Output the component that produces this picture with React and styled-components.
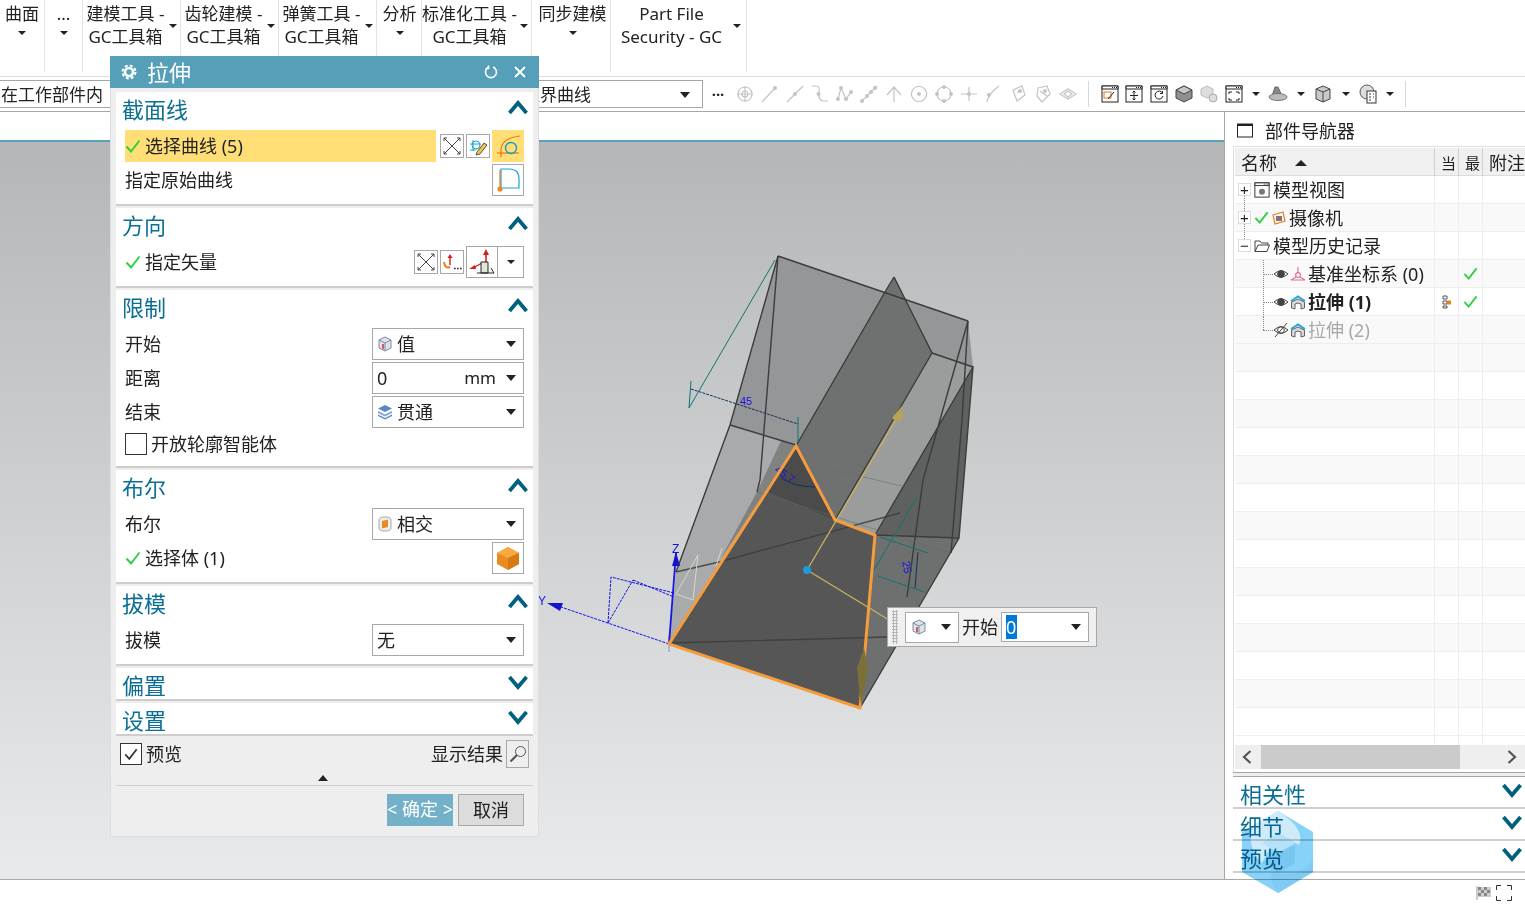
import React from "react";
import styled, { createGlobalStyle } from "styled-components";

const GlobalStyle = createGlobalStyle`
  html, body { margin: 0; padding: 0; background: #fff; overflow: hidden; }
  * { box-sizing: border-box; }
  body { font-family: "Noto Sans", "Noto Sans CJK SC", sans-serif; color: #222; }
`;

const ribbonItems = [
  { w: 45, lines: ["曲面"] },
  { w: 38, lines: ["..."] },
  { w: 98, pr: 12, lines: ["建模工具 -", "GC工具箱"] },
  { w: 98, pr: 12, lines: ["齿轮建模 -", "GC工具箱"] },
  { w: 98, pr: 12, lines: ["弹簧工具 -", "GC工具箱"] },
  { w: 45, pl: 1, lines: ["分析"] },
  { w: 110, pr: 14, lines: ["标准化工具 -", "GC工具箱"] },
  { w: 79, pl: 3, lines: ["同步建模"] },
  { w: 136, pr: 14, caretRight: 5, lines: ["Part File", "Security - GC"] },
];

const treeRows = [
  { kind: "view", label: "模型视图", line: "rootFirst" },
  { kind: "camera", label: "摄像机", line: "root" },
  { kind: "history", label: "模型历史记录", line: "rootLast" },
  { kind: "csys", label: "基准坐标系 (0)", latest: true, line: "child" },
  { kind: "extrude", label: "拉伸 (1)", bold: true, latest: true, current: true, line: "child" },
  { kind: "extrudeOff", label: "拉伸 (2)", muted: true, line: "childLast" },
];

const Check = ({ size = 16, color = "#2fcf45" }) => (
  <svg width={size} height={size} viewBox="0 0 16 16">
    <path d="M1.5 8.5 L6 13.5 L14.5 2.5" fill="none" stroke={color} strokeWidth="2" />
  </svg>
);

const Chevron = ({ up }) => (
  <svg width="20" height="14" viewBox="0 0 20 14">
    <path
      d={up ? "M1.5 13 L10 3 L18.5 13" : "M1.5 1 L10 11 L18.5 1"}
      fill="none"
      stroke="#00607f"
      strokeWidth="3.8"
    />
  </svg>
);

const CrossArrows = () => (
  <svg width="18" height="18" viewBox="0 0 18 18" fill="none" stroke="#444" strokeWidth="1">
    <path d="M1 1 L17 17 M17 1 L1 17 M1 1 h3 M1 1 v3 M17 1 h-3 M17 1 v3 M1 17 h3 M1 17 v-3 M17 17 h-3 M17 17 v-3" />
  </svg>
);

const SketchIcon = () => (
  <svg width="20" height="20" viewBox="0 0 20 20" fill="none">
    <path d="M2 8 H13 M5 4 V15 M2 14 H8" stroke="#18a7d0" />
    <circle cx="8" cy="9" r="4" stroke="#18a7d0" />
    <path d="M9 16 L16 7 L19 9 L12 18 L8 19 Z" fill="#f0c34e" stroke="#333" strokeWidth="0.8" />
  </svg>
);

const CurveIcon = () => (
  <svg width="26" height="26" viewBox="0 0 26 26" fill="none">
    <path d="M6 24 V16 Q7 5 25 3" stroke="#e8761c" strokeWidth="1.2" />
    <path d="M2 20 H24" stroke="#e8761c" strokeWidth="1.2" />
    <circle cx="16" cy="15" r="5.5" stroke="#12a0c8" strokeWidth="1.4" />
  </svg>
);

const OriginCurve = () => (
  <svg width="26" height="26" viewBox="0 0 26 26" fill="none">
    <path d="M6 21 H24 V12 Q24 2 14 2 H6 Z" stroke="#12a8d0" strokeWidth="1.2" fill="none" />
    <path d="M5 3 V21" stroke="#e8761c" strokeWidth="1.2" />
    <circle cx="5" cy="22" r="2.6" fill="#e88a1c" />
  </svg>
);

const VectorDots = () => (
  <svg width="20" height="20" viewBox="0 0 20 20" fill="none">
    <path d="M8 2 L5.5 6 H10.5 Z" fill="#d02020" />
    <path d="M8 5 V13" stroke="#d02020" strokeWidth="1.4" />
    <path d="M2 10 Q3 17 8 15" stroke="#e8801c" strokeWidth="2" />
    <path d="M12 16.5 h1.6 M15 16.5 h1.6 M18 16.5 h1.6" stroke="#222" strokeWidth="1.6" />
  </svg>
);

const VectorAxes = () => (
  <svg width="28" height="28" viewBox="0 0 28 28" fill="none">
    <path d="M18 1 L15 7 H21 Z" fill="#d02020" />
    <path d="M18 6 V14" stroke="#d02020" strokeWidth="1.6" />
    <path d="M1 21 L7 17 L8 21 Z" fill="#d02020" />
    <path d="M5 20 L14 15" stroke="#d02020" strokeWidth="1.4" />
    <path d="M13 14 H20 V25 H13 Z" fill="#dfe6d8" stroke="#222" />
    <path d="M9 25 H26 L23 20" stroke="#222" />
  </svg>
);

const BlockValue = () => (
  <svg width="16" height="16" viewBox="0 0 16 16">
    <path d="M8 1 L14 4 V12 L8 15 L2 12 V4 Z" fill="#dfe3ea" stroke="#7d8aa0" />
    <path d="M2 4 L8 7 L14 4 M8 7 V15" fill="none" stroke="#7d8aa0" />
    <path d="M6 8 V13" stroke="#d02020" strokeWidth="1.4" />
  </svg>
);

const BlockThrough = () => (
  <svg width="16" height="16" viewBox="0 0 16 16" fill="#5a86c8">
    <path d="M8 1 L15 4.5 L8 8 L1 4.5 Z" />
    <path d="M1 7 L8 10.5 L15 7 V9 L8 12.5 L1 9 Z" fill="#7fa3d8" />
    <path d="M1 10.5 L8 14 L15 10.5 V12 L8 15.5 L1 12 Z" fill="#5a86c8" />
  </svg>
);

const BlockIntersect = () => (
  <svg width="16" height="16" viewBox="0 0 16 16">
    <path d="M2 4 Q2 1 8 1 Q14 1 14 4 V12 Q14 15 8 15 Q2 15 2 12 Z" fill="#eee" stroke="#a8a8a8" />
    <path d="M5 5 L11 3.5 V11 L5 12.5 Z" fill="#ea8a22" />
  </svg>
);

const OrangeCube = () => (
  <svg width="26" height="26" viewBox="0 0 26 26">
    <path d="M13 2 L24 8 V19 L13 25 L2 19 V8 Z" fill="#e88c20" />
    <path d="M13 2 L24 8 L13 13 L2 8 Z" fill="#f5a940" />
    <path d="M13 13 L24 8 V19 L13 25 Z" fill="#d87a14" />
  </svg>
);

const Magnifier = () => (
  <svg width="18" height="18" viewBox="0 0 18 18" fill="none" stroke="#555">
    <circle cx="11.5" cy="6.5" r="5" />
    <path d="M8 10 L1.5 16.5" strokeWidth="2.2" />
  </svg>
);

const GrayIcon = ({ d, dots = [] }) => (
  <svg width="20" height="20" viewBox="0 0 20 20" fill="none" stroke="#c4c4c4" strokeWidth="1.2">
    <path d={d} />
    {dots.map(([x, y], i) => (
      <circle key={i} cx={x} cy={y} r="2" fill="#c4c4c4" stroke="none" />
    ))}
  </svg>
);

const grayIcons = [
  { d: "M10 2 V18 M2 10 H18 M10 3 a7 7 0 1 0 .01 0 M7 10 a3 3 0 1 0 6 0 a3 3 0 1 0 -6 0" },
  { d: "M2 18 L16 3", dots: [[15, 4]] },
  { d: "M2 18 L18 2", dots: [[10, 10]] },
  { d: "M2 2 H6 Q10 2 9 8 Q8 16 13 17 H18", dots: [[8.5, 10]] },
  { d: "M3 15 L6 4 L11 15 L16 8", dots: [[3, 15], [6, 4], [11, 15], [16, 8]] },
  { d: "M2 18 L18 2", dots: [[3, 17], [8, 12], [12, 8], [16, 4]] },
  { d: "M10 3 V18 M3 11 L10 3 L17 11" },
  { d: "M10 2.5 a7.5 7.5 0 1 0 .01 0", dots: [[10, 10]] },
  { d: "M10 3 a7 7 0 1 0 .01 0", dots: [[10, 3], [10, 17], [3, 10], [17, 10]] },
  { d: "M10 3 V17 M2 10 H18", dots: [[10, 10]] },
  { d: "M4 18 Q5 10 16 2", dots: [[6, 11]] },
  { d: "M5 6 L14 2 L17 11 L9 17 Z M9 8 h4", dots: [[12, 7]] },
  { d: "M5 4 L14 2 L17 10 L9 18 L4 12 Z M7 7 L14 12", dots: [[12, 7]] },
  { d: "M10 5 L18 10 L10 15 L2 10 Z M6 10 L10 7 L14 10 L10 13 Z" },
];

const WindowIcon = ({ size = 18, children }) => (
  <svg width={size} height={size} viewBox="0 0 18 18" fill="none">
    <rect x="1" y="1" width="16" height="16" fill="#fff" stroke="#222" />
    <path d="M1 1 H17 V4 H1 Z" fill="#fff" stroke="#222" />
    <path d="M11 2.5 h1 M13 2.5 h1 M15 2.5 h1" stroke="#222" />
    {children}
  </svg>
);

const HeavyCube = () => (
  <svg width="20" height="20" viewBox="0 0 20 20">
    <path d="M10 2 L18 6 V14 L10 18 L2 14 V6 Z" fill="#8f8f8f" stroke="#444" />
    <path d="M2 6 L10 10 L18 6 L10 2 Z" fill="#c8c8c8" stroke="#444" />
  </svg>
);

const CylCube = () => (
  <svg width="20" height="20" viewBox="0 0 20 20">
    <path d="M3 5 L10 2 L17 5 V15 L10 18 L3 15 Z" fill="#c8c8c8" stroke="#444" />
    <path d="M3 5 L10 8 L17 5 M10 8 V18" fill="none" stroke="#444" />
  </svg>
);

const Eye = ({ off }) => (
  <svg width="16" height="16" viewBox="0 0 16 16" fill="none" stroke="#444">
    <path d="M1 8 Q8 1.5 15 8 Q8 14.5 1 8 Z" />
    <circle cx="8" cy="8" r="3.4" fill={off ? "none" : "#444"} />
    {off && <path d="M2 15 L14 1" />}
  </svg>
);

const ExtrudeNode = () => (
  <svg width="16" height="16" viewBox="0 0 16 16" fill="none">
    <path d="M1 7 L8 2.5 L15 7" stroke="#26a8d8" strokeWidth="2" />
    <path d="M1.5 8 L8 5 L14.5 8 V14 L11 15 V10 L8 9 L5 10 V15 L1.5 14 Z" fill="#d8d8d8" stroke="#555" strokeWidth="0.9" />
  </svg>
);

const Csys = () => (
  <svg width="16" height="16" viewBox="0 0 16 16" fill="none" stroke="#e0708c" strokeWidth="1.1">
    <circle cx="8" cy="9" r="2.4" />
    <path d="M8 1 V7 M6 11 L1 14 M10 11 L15 14 M1 14 H15" />
  </svg>
);

const Model = () => (
  <ModelSvg viewBox="0 142 1224 737">
    {/* back and side faces */}
    <polygon points="778,256 968,321 973,367 875,535 835,520 796,446 730,425" fill="#959697" />
    <polygon points="730,425 796,446 669,644 676,572" fill="#a9aaab" />
    <polygon points="796,446 781,441 757,492 720,560" fill="#808181" />
    <polygon points="885,292 894,277 932,353 835,520 796,446" fill="#6f7070" />
    <polygon points="932,353 973,367 875,535 835,520" fill="#9b9c9c" />
    <polygon points="973,367 959,538 875,535" fill="#5f6060" />
    <polygon points="875,535 959,538 860,708" fill="#6e6f6f" />
    <polygon points="796,446 835,520 875,535 860,708 669,644" fill="#565656" />
    <polygon points="796,446 835,520 766,491" fill="#4b4b4b" />
    {/* edges */}
    <g fill="none" stroke="#3c3c3c" strokeWidth="1.4">
      <path d="M778,256 L968,321 M778,256 L730,425 L676,572 M730,425 L796,445" />
      <path d="M778,256 L760,480 L757,492 M885,292 L796,446 M894,277 L885,292 M894,277 L932,353 L835,520" />
      <path d="M932,353 L973,367 L875,535 M968,321 L923,480 L907,597 M973,367 L959,538 L860,708" />
      <path d="M968,321 L962,420 L951,553 M959,538 L875,535" />
      <path d="M676,572 L719,562 L900,513 M669,643 L887,637" strokeOpacity="0.85" />
    </g>
    <path d="M757,492 L950,553 M835,470 L918,490" fill="none" stroke="#666" strokeOpacity="0.5" />
    {/* light construction lines near the origin */}
    <path d="M698,555 L676,594 L693,600 Z M722,548 L716,566" fill="none" stroke="#d5d5d5" />
    {/* dimensions */}
    <g fill="none" stroke="#11756f" strokeWidth="1">
      <path d="M775,260 L689,408 M691,381 L689,408 M798,417 L798,442" />
      <path d="M880,537 L928,553 M878,576 L924,592 M917,497 L874,570" />
    </g>
    <g fill="none" stroke="#12305c" strokeWidth="1">
      <path d="M691,389 L798,424" strokeDasharray="3 1" />
      <path d="M918,552 L915,588 M781,478 Q795,487 815,487" />
    </g>
    <DimLabel x="740" y="405">45</DimLabel>
    <DimLabel x="775" y="478" transform="rotate(35 785 473)">45.7</DimLabel>
    <DimLabel x="902" y="570" transform="rotate(80 907 566)">25</DimLabel>
    {/* datum axes */}
    <g fill="none" stroke="#1414e6" strokeWidth="1">
      <path d="M608,623 L611,577 L674,593 M633,580 L674,597 M608,623 L633,580" strokeDasharray="3 1" />
      <path d="M669,644 L561,607" strokeDasharray="3 1" />
      <path d="M669,644 L676,553" strokeWidth="1.8" />
      <path d="M669,636 V652" strokeOpacity="0.4" />
    </g>
    <path d="M676,552 L672,566 H680 Z" fill="#1414c8" />
    <path d="M547,603 L563,603 L560,611 Z" fill="#1414c8" />
    <AxisLabel x="672" y="553">Z</AxisLabel>
    <AxisLabel x="538" y="605">Y</AxisLabel>
    {/* section outline */}
    <polygon
      points="796,446 835,520 875,535 860,708 669,644"
      fill="none"
      stroke="#f59c3c"
      strokeWidth="3"
    />
    {/* extrude handles */}
    <g fill="none" stroke="#c9b25e" strokeWidth="1.3">
      <path d="M807,570 L897,418" />
      <path d="M807,570 L889,620" />
    </g>
    <path d="M902,406 L892,418 Q897,424 903,419 Z" fill="#b8a35c" />
    <path d="M864,648 L857,668 L861,706 L868,668 Z" fill="#7d6f38" />
    <circle cx="807" cy="570" r="4" fill="#1a9ae0" />
  </ModelSvg>
);

const Section = ({ title, open = true, tall, children }) => (
  <Card $height={tall}>
    <CardHead>
      <CardTitle>{title}</CardTitle>
      <ChevronSlot>
        <Chevron up={open} />
      </ChevronSlot>
    </CardHead>
    {children}
  </Card>
);

const Select = ({ icon, children }) => (
  <SelectBox>
    {icon && <SelectIcon>{icon}</SelectIcon>}
    <SelectText>{children}</SelectText>
    <Caret />
  </SelectBox>
);

const treeIcon = (row) => {
  switch (row.kind) {
    case "view":
      return (
        <>
          <Toggle>+</Toggle>
          <WindowIcon size={16}>
            <circle cx="9" cy="11" r="3.4" fill="#777" />
          </WindowIcon>
        </>
      );
    case "camera":
      return (
        <>
          <Toggle>+</Toggle>
          <Check size={15} />
          <svg width="16" height="16" viewBox="0 0 16 16">
            <path d="M2 5 L12 2 L14 11 L4 14 Z" fill="none" stroke="#ee7d1a" strokeWidth="1.2" />
            <rect x="5" y="6" width="6" height="5" fill="#777" />
          </svg>
        </>
      );
    case "history":
      return (
        <>
          <Toggle>−</Toggle>
          <svg width="16" height="14" viewBox="0 0 16 14" fill="none" stroke="#444">
            <path d="M1 12.5 V2 H6 L7.5 4 H14 V6 M1 12.5 L4 6 H15.5 L13 12.5 Z" />
          </svg>
        </>
      );
    case "csys":
      return (
        <>
          <Eye />
          <Csys />
        </>
      );
    default:
      return (
        <>
          <Eye off={row.kind === "extrudeOff"} />
          <ExtrudeNode />
        </>
      );
  }
};

const App = () => {
  const emptyRows = Array.from({ length: 14 });
  return (
    <Page>
      <GlobalStyle />
      <Ribbon>
        {ribbonItems.map((item) => (
          <RibbonItem key={item.lines[0]} $w={item.w} $pl={item.pl} $pr={item.pr}>
            {item.lines.map((line) => (
              <RibbonLine key={line}>{line}</RibbonLine>
            ))}
            {item.lines.length === 1 ? <RibbonCaret /> : <SideCaret $right={item.caretRight} />}
          </RibbonItem>
        ))}
      </Ribbon>

      <Toolbar>
        <ToolSelect $w={200}>
          <ToolSelectText>在工作部件内</ToolSelectText>
        </ToolSelect>
        <ToolSelect $w={403} $ml={100} $pl={222}>
          <ToolSelectText>边界曲线</ToolSelectText>
          <Caret />
        </ToolSelect>
        <MoreDots>···</MoreDots>
        {grayIcons.map((icon, i) => (
          <ToolSlot key={i}>
            <GrayIcon d={icon.d} dots={icon.dots} />
          </ToolSlot>
        ))}
        <ToolSep />
        <ToolSlot>
          <WindowIcon>
            <rect x="3" y="7" width="7" height="6" stroke="#e8761c" />
            <path d="M7 14 L13 7" stroke="#222" />
          </WindowIcon>
        </ToolSlot>
        <ToolSlot>
          <WindowIcon>
            <path d="M9 6 V15 M5 10.5 H13 M7.5 7.5 L9 6 L10.5 7.5 M7.5 13.5 L9 15 L10.5 13.5" stroke="#222" />
          </WindowIcon>
        </ToolSlot>
        <ToolSlot>
          <WindowIcon>
            <path d="M12.5 8 A4 4 0 1 0 13 11 M12.5 6 V8.5 H10" stroke="#222" />
          </WindowIcon>
        </ToolSlot>
        <ToolSlot>
          <HeavyCube />
        </ToolSlot>
        <ToolSlot>
          <svg width="20" height="20" viewBox="0 0 20 20">
            <path d="M2 5 L8 2 L14 5 V11 L8 14 L2 11 Z" fill="#ddd" stroke="#bbb" />
            <circle cx="14" cy="14" r="4" fill="#ddd" stroke="#aaa" />
          </svg>
        </ToolSlot>
        <ToolSlot>
          <WindowIcon>
            <path d="M4 7 h3 M4 7 v2 M14 7 h-3 M14 7 v2 M4 15 h3 M4 15 v-2 M14 15 h-3 M14 15 v-2" stroke="#222" />
          </WindowIcon>
        </ToolSlot>
        <ToolCaret>
          <Caret $small />
        </ToolCaret>
        <ToolSlot>
          <svg width="20" height="20" viewBox="0 0 20 20">
            <path d="M7 3 H10 L14 12 H4 Z" fill="#888" stroke="#666" />
            <ellipse cx="10" cy="13" rx="9" ry="3.5" fill="#bbb" stroke="#777" />
          </svg>
        </ToolSlot>
        <ToolCaret>
          <Caret $small />
        </ToolCaret>
        <ToolSlot>
          <CylCube />
        </ToolSlot>
        <ToolCaret>
          <Caret $small />
        </ToolCaret>
        <ToolSlot>
          <svg width="20" height="20" viewBox="0 0 20 20">
            <circle cx="9" cy="8" r="7" fill="#ddd" stroke="#555" />
            <rect x="9" y="7" width="9" height="12" fill="#fff" stroke="#333" />
            <path d="M11 10 h2 M15 10 h1 M11 13 h2 M15 13 h1 M11 16 h2" stroke="#333" />
          </svg>
        </ToolSlot>
        <ToolCaret>
          <Caret $small />
        </ToolCaret>
        <ToolSep $ml={5} />
      </Toolbar>

      <Main>
        <Workspace>
          <WorkspaceStrip />
          <Viewport>
            <Model />
          </Viewport>
        </Workspace>

        <Navigator>
          <NavTitle>
            <svg width="16" height="15" viewBox="0 0 16 15" fill="none" stroke="#222">
              <rect x="0.5" y="1" width="15" height="13" />
              <path d="M0 2 H16" strokeWidth="2" />
            </svg>
            <span>部件导航器</span>
          </NavTitle>
          <TreeFrame>
            <TreeHeader>
              <NameHead>
                名称
                <SortUp />
              </NameHead>
              <NarrowHead>当</NarrowHead>
              <NarrowHead>最</NarrowHead>
              <NoteHead>附注</NoteHead>
            </TreeHeader>
            {treeRows.map((row, i) => (
              <TreeRow key={row.label} $odd={i % 2 === 1}>
                <TreeName $line={row.line}>
                  {treeIcon(row)}
                  <TreeLabel $bold={row.bold} $muted={row.muted} $flush={row.kind === "camera"}>
                    {row.label}
                  </TreeLabel>
                </TreeName>
                <TreeCell>
                  {row.current && (
                    <svg width="9" height="14" viewBox="0 0 9 14">
                      <path d="M1 1 H5 V4 H1 Z M1 6 H5 V9 H1 Z M1 11 H5 V13 H1 Z" fill="none" stroke="#555" />
                      <rect x="5" y="5.5" width="4" height="4" fill="#e8801c" />
                    </svg>
                  )}
                </TreeCell>
                <TreeCell>{row.latest && <Check size={15} />}</TreeCell>
                <TreeCell />
              </TreeRow>
            ))}
            {emptyRows.map((_, i) => (
              <TreeRow key={i} $odd={i % 2 === 0}>
                <TreeName />
                <TreeCell />
                <TreeCell />
                <TreeCell />
              </TreeRow>
            ))}
            <TreeRow $short>
              <TreeName />
              <TreeCell />
              <TreeCell />
              <TreeCell />
            </TreeRow>
            <ScrollBar>
              <ScrollArrow>
                <svg width="10" height="14" viewBox="0 0 10 14" fill="none" stroke="#555" strokeWidth="2.2">
                  <path d="M8.5 1 L2 7 L8.5 13" />
                </svg>
              </ScrollArrow>
              <ScrollThumb />
              <ScrollArrow $right>
                <svg width="10" height="14" viewBox="0 0 10 14" fill="none" stroke="#555" strokeWidth="2.2">
                  <path d="M1.5 1 L8 7 L1.5 13" />
                </svg>
              </ScrollArrow>
            </ScrollBar>
          </TreeFrame>
          <SplitBar />
          <NavSection>
            <NavSectionTitle>相关性</NavSectionTitle>
            <Chevron />
          </NavSection>
          <NavSection>
            <NavSectionTitle>细节</NavSectionTitle>
            <Chevron />
          </NavSection>
          <NavSection>
            <NavSectionTitle>预览</NavSectionTitle>
            <Chevron />
          </NavSection>
        </Navigator>
      </Main>

      <StatusBar>
        <svg width="16" height="16" viewBox="0 0 16 16">
          <path d="M1 1 V15" stroke="#999" />
          <path d="M2 2 H15 V12 H2 Z" fill="#ccc" />
          <path d="M2 2 h3 v3 h-3 Z M8 2 h3 v3 h-3 Z M5 5 h3 v3 h-3 Z M11 5 h3 v3 h-3 Z M2 8 h3 v3 h-3 Z M8 8 h3 v3 h-3 Z" fill="#888" />
        </svg>
        <svg width="16" height="16" viewBox="0 0 16 16" fill="none" stroke="#333">
          <path d="M0.5 5 V0.5 H5 M11 0.5 H15.5 V5 M15.5 11 V15.5 H11 M5 15.5 H0.5 V11" />
        </svg>
      </StatusBar>

      <Dialog>
        <DialogTitle>
          <svg width="16" height="16" viewBox="0 0 16 16" fill="none" stroke="#fff">
            <circle cx="8" cy="8" r="4" strokeWidth="2.6" />
            <circle cx="8" cy="8" r="6.5" strokeWidth="2" strokeDasharray="3 2.1" />
          </svg>
          <DialogName>拉伸</DialogName>
          <ReloadIcon width="14" height="14" viewBox="0 0 14 14" fill="none" stroke="#fff" strokeWidth="1.6">
            <path d="M4 2.5 A5.5 5.5 0 1 0 9 2 M4.5 0.5 V3.5 H1.5" />
          </ReloadIcon>
          <svg width="12" height="12" viewBox="0 0 12 12" stroke="#fff" strokeWidth="1.8">
            <path d="M1 1 L11 11 M11 1 L1 11" />
          </svg>
        </DialogTitle>

        <DialogBody>
          <Section title="截面线" tall={114}>
            <Row>
              <ActiveLabel>
                <Check />
                <RowText>选择曲线 (5)</RowText>
              </ActiveLabel>
              <RowTools>
                <SmallTool>
                  <CrossArrows />
                </SmallTool>
                <SmallTool>
                  <SketchIcon />
                </SmallTool>
                <BigTool $active>
                  <CurveIcon />
                </BigTool>
              </RowTools>
            </Row>
            <RowWithGap>
              <RowText>指定原始曲线</RowText>
              <BigTool>
                <OriginCurve />
              </BigTool>
            </RowWithGap>
          </Section>

          <Section title="方向" tall={80}>
            <Row>
              <Label>
                <Check />
                <RowText>指定矢量</RowText>
              </Label>
              <RowTools>
                <SmallTool>
                  <CrossArrows />
                </SmallTool>
                <SmallTool>
                  <VectorDots />
                </SmallTool>
                <SplitTool>
                  <SplitMain>
                    <VectorAxes />
                  </SplitMain>
                  <SplitDrop>
                    <Caret $small />
                  </SplitDrop>
                </SplitTool>
              </RowTools>
            </Row>
          </Section>

          <Section title="限制" tall={178}>
            <Row>
              <RowText>开始</RowText>
              <Select icon={<BlockValue />}>值</Select>
            </Row>
            <RowWithGap>
              <RowText>距离</RowText>
              <SelectBox>
                <SelectText>0</SelectText>
                <UnitText>mm</UnitText>
                <Caret />
              </SelectBox>
            </RowWithGap>
            <RowWithGap>
              <RowText>结束</RowText>
              <Select icon={<BlockThrough />}>贯通</Select>
            </RowWithGap>
            <CheckRow>
              <CheckBox />
              <RowText>开放轮廓智能体</RowText>
            </CheckRow>
          </Section>

          <Section title="布尔" tall={114}>
            <Row>
              <RowText>布尔</RowText>
              <Select icon={<BlockIntersect />}>相交</Select>
            </Row>
            <RowWithGap>
              <Label>
                <Check />
                <RowText>选择体 (1)</RowText>
              </Label>
              <BigTool>
                <OrangeCube />
              </BigTool>
            </RowWithGap>
          </Section>

          <Section title="拔模" tall={80}>
            <Row>
              <RowText>拔模</RowText>
              <Select>无</Select>
            </Row>
          </Section>

          <Section title="偏置" open={false} tall={33} />
          <Section title="设置" open={false} tall={33} />

          <PreviewRow>
            <PreviewLeft>
              <CheckBox>
                <Check size={14} color="#333" />
              </CheckBox>
              <RowText>预览</RowText>
            </PreviewLeft>
            <PreviewRight>
              <RowText>显示结果</RowText>
              <ResultButton>
                <Magnifier />
              </ResultButton>
            </PreviewRight>
          </PreviewRow>
          <CollapseRow>
            <SortUp />
          </CollapseRow>
          <ButtonRow>
            <OkButton>&lt; 确定 &gt;</OkButton>
            <CancelButton>取消</CancelButton>
          </ButtonRow>
        </DialogBody>
      </Dialog>

      <FloatingInput>
        <Grip />
        <FloatSelect>
          <BlockValue />
          <Caret />
        </FloatSelect>
        <RowText>开始</RowText>
        <FloatField>
          <Selected>0</Selected>
          <Caret />
        </FloatField>
      </FloatingInput>

      <Watermark viewBox="0 0 72 82">
        <path d="M36 0 L71 21 V61 L36 82 L0 61 V21 Z" fill="#86d2f8" />
        <path d="M36 0 L10 15 Q5 40 20 52 L36 22 L57 34 Q64 18 36 0 Z" fill="#cdebfb" />
        <path d="M20 52 L36 62 L53 52 V34 L36 42 Z" fill="#79c6ef" />
        <path d="M36 22 L53 32 L36 42 L20 32 Z" fill="#b6e2f9" />
        <path d="M36 82 Q22 60 36 62 Q60 66 71 48 V61 Z" fill="#7fcbf3" />
      </Watermark>
    </Page>
  );
};

export default App;

const treeLineLeft = (line) => (line && line.startsWith("root") ? 9 : 28);

const Page = styled.div`
  position: relative;
  width: 1525px;
  height: 906px;
  display: flex;
  flex-direction: column;
  background: #fff;
  overflow: hidden;
`;

const Ribbon = styled.div`
  height: 77px;
  flex: none;
  display: flex;
  border-bottom: 1px solid #dcdcdc;
`;

const RibbonItem = styled.div`
  position: relative;
  width: ${(p) => p.$w}px;
  height: 72px;
  flex: none;
  padding: 2px ${(p) => p.$pr || 0}px 0 ${(p) => p.$pl || 0}px;
  display: flex;
  flex-direction: column;
  align-items: center;
  border-right: 1px solid #e2e2e2;
`;

const RibbonLine = styled.div`
  font-size: 17px;
  line-height: 23px;
  white-space: nowrap;
`;

const RibbonCaret = styled.div`
  margin-top: 6px;
  border-left: 4px solid transparent;
  border-right: 4px solid transparent;
  border-top: 4px solid #222;
`;

const SideCaret = styled(RibbonCaret)`
  position: absolute;
  right: ${(p) => p.$right || 3}px;
  top: 24px;
  margin: 0;
`;

const Toolbar = styled.div`
  height: 35px;
  flex: none;
  display: flex;
  align-items: center;
  border-bottom: 1px solid #a6a6a6;
`;

const ToolSelect = styled.div`
  width: ${(p) => p.$w}px;
  height: 28px;
  flex: none;
  margin-left: ${(p) => p.$ml || 0}px;
  padding: 1px 12px 0 ${(p) => p.$pl || 1}px;
  display: flex;
  align-items: center;
  justify-content: space-between;
  border: 1px solid #a6a6a6;
  border-left-width: ${(p) => (p.$ml ? 1 : 0)}px;
`;

const ToolSelectText = styled.span`
  font-size: 17px;
  line-height: 24px;
  white-space: nowrap;
`;

const MoreDots = styled.div`
  width: 22px;
  margin: 0 4px;
  text-align: center;
  font-size: 15px;
  font-weight: 700;
  line-height: 20px;
`;

const ToolSlot = styled.div`
  width: 24.8px;
  flex: none;
  display: flex;
  justify-content: center;
  align-items: center;
`;

const ToolCaret = styled.div`
  width: 20px;
  flex: none;
  display: flex;
  justify-content: center;
`;

const ToolSep = styled.div`
  width: 1px;
  height: 26px;
  flex: none;
  margin: 0 8px 0 ${(p) => p.$ml || 8}px;
  background: #d8d8d8;
`;

const Main = styled.div`
  flex: 1;
  min-height: 0;
  display: flex;
`;

const Workspace = styled.div`
  width: 1224px;
  flex: none;
  display: flex;
  flex-direction: column;
`;

const WorkspaceStrip = styled.div`
  height: 30px;
  flex: none;
  background: #fff;
  border-bottom: 2px solid #5aa3bd;
`;

const Viewport = styled.div`
  flex: 1;
  min-height: 0;
  background: linear-gradient(#b5b6b8, #e9eaeb);
`;

const ModelSvg = styled.svg`
  display: block;
  width: 100%;
  height: 100%;
`;

const DimLabel = styled.text`
  font-family: "Liberation Sans", sans-serif;
  font-size: 11px;
  fill: #1414e6;
`;

const AxisLabel = styled.text`
  font-family: "Liberation Sans", sans-serif;
  font-size: 12px;
  fill: #1414e6;
`;

const Navigator = styled.div`
  flex: 1;
  min-width: 0;
  display: flex;
  flex-direction: column;
  padding-left: 8px;
  border-left: 1px solid #a6a6a6;
`;

const NavTitle = styled.div`
  height: 34px;
  flex: none;
  margin-left: -5px;
  padding: 2px 0 0 9px;
  display: flex;
  align-items: center;
  gap: 12px;
  font-size: 18px;
`;

const TreeFrame = styled.div`
  height: 626px;
  flex: none;
  padding: 1px 0 0 1px;
  border: 1px solid #dedede;
  border-right: 0;
  border-bottom: 0;
  overflow: hidden;
  display: flex;
  flex-direction: column;
`;

const TreeHeader = styled.div`
  height: 28px;
  flex: none;
  display: grid;
  grid-template-columns: 200px 24px 24px 1fr;
  background: #f0f0f0;
  border-bottom: 1px solid #dcdcdc;
  font-size: 18px;
  line-height: 30px;
`;

const NameHead = styled.div`
  padding: 0 0 0 6px;
  display: flex;
  align-items: center;
  gap: 18px;
  border-right: 1px solid #d0d0d0;
`;

const NarrowHead = styled.div`
  padding-left: 6px;
  overflow: hidden;
  white-space: nowrap;
  font-size: 15px;
  border-right: 1px solid #d0d0d0;
`;

const NoteHead = styled.div`
  padding-left: 6px;
  white-space: nowrap;
  overflow: hidden;
`;

const SortUp = styled.span`
  display: block;
  width: 0;
  height: 0;
  border-left: 6px solid transparent;
  border-right: 6px solid transparent;
  border-bottom: 6px solid #222;
`;

const TreeRow = styled.div`
  height: ${(p) => (p.$short ? 9 : 28)}px;
  flex: none;
  display: grid;
  grid-template-columns: 200px 24px 24px 1fr;
  background: ${(p) => (p.$odd ? "#f9f9f9" : "#fff")};
  border-bottom: ${(p) => (p.$short ? 0 : "1px solid #eeeeee")};
`;

const TreeName = styled.div`
  position: relative;
  padding-left: ${(p) => (p.$line && p.$line.startsWith("child") ? 38 : 3)}px;
  display: flex;
  align-items: center;
  gap: ${(p) => (p.$line && p.$line.startsWith("child") ? 1 : 2)}px;
  border-right: 1px solid #eeeeee;
  &::before {
    content: "";
    display: ${(p) => (p.$line ? "block" : "none")};
    position: absolute;
    left: ${(p) => treeLineLeft(p.$line)}px;
    top: ${(p) => (p.$line === "rootFirst" ? 20 : 0)}px;
    bottom: ${(p) => (p.$line === "childLast" ? 13 : p.$line === "rootLast" ? 20 : 0)}px;
    border-left: 1px dotted #888;
  }
  &::after {
    content: "";
    display: ${(p) => (p.$line && p.$line.startsWith("child") ? "block" : "none")};
    position: absolute;
    left: 28px;
    top: 14px;
    width: 10px;
    border-top: 1px dotted #888;
  }
`;

const TreeLabel = styled.span`
  margin-left: ${(p) => (p.$flush ? 0 : 1)}px;
  font-size: 18px;
  line-height: 26px;
  white-space: nowrap;
  font-weight: ${(p) => (p.$bold ? 700 : 400)};
  color: ${(p) => (p.$muted ? "#a8a8a8" : "#222")};
`;

const Toggle = styled.span`
  position: relative;
  z-index: 1;
  width: 13px;
  height: 13px;
  flex: none;
  display: flex;
  align-items: center;
  justify-content: center;
  margin-right: 1px;
  background: #fff;
  border: 1px solid #dcdcdc;
  font-family: "Liberation Sans", sans-serif;
  font-size: 15px;
  line-height: 11px;
`;

const TreeCell = styled.div`
  display: flex;
  align-items: center;
  justify-content: center;
  border-right: 1px solid #eeeeee;
  &:last-child {
    border-right: 0;
  }
`;

const ScrollBar = styled.div`
  height: 24px;
  flex: none;
  display: flex;
  background: #efefef;
`;

const ScrollArrow = styled.div`
  width: ${(p) => (p.$right ? "auto" : "26px")};
  flex: ${(p) => (p.$right ? 1 : "none")};
  padding: 0 ${(p) => (p.$right ? 8 : 0)}px 0 ${(p) => (p.$right ? 0 : 7)}px;
  display: flex;
  align-items: center;
  justify-content: ${(p) => (p.$right ? "flex-end" : "flex-start")};
`;

const ScrollThumb = styled.div`
  width: 199px;
  flex: none;
  background: #cbcbcb;
`;

const SplitBar = styled.div`
  height: 5px;
  flex: none;
  background: #eeeeee;
  border-top: 1px solid #a6a6a6;
  border-bottom: 1px solid #a6a6a6;
`;

const NavSection = styled.div`
  height: 32px;
  flex: none;
  padding: 0 3px 0 7px;
  display: flex;
  justify-content: space-between;
  align-items: flex-start;
  border-bottom: 2px solid #cfcfcf;
  overflow: hidden;
  svg {
    margin-top: 7px;
  }
`;

const NavSectionTitle = styled.div`
  font-size: 22px;
  line-height: 34px;
  color: #0b6f93;
`;

const StatusBar = styled.div`
  height: 27px;
  flex: none;
  padding: 5px 13px 0 0;
  display: flex;
  justify-content: flex-end;
  align-items: flex-start;
  gap: 4px;
  border-top: 1px solid #aaa;
`;

const Dialog = styled.div`
  position: absolute;
  left: 110px;
  top: 56px;
  width: 429px;
  height: 781px;
  display: flex;
  flex-direction: column;
  background: #eeeeee;
  border: 1px solid #dedede;
  border-top: 0;
`;

const DialogTitle = styled.div`
  height: 32px;
  flex: none;
  margin: 0 -1px;
  padding: 0 13px 0 11px;
  display: flex;
  align-items: center;
  gap: 10px;
  background: #569fb9;
`;

const DialogName = styled.div`
  flex: 1;
  font-size: 22px;
  line-height: 32px;
  color: #fff;
`;

const ReloadIcon = styled.svg`
  margin-right: 6px;
`;

const DialogBody = styled.div`
  flex: 1;
  padding: 4px 5px 0;
  display: flex;
  flex-direction: column;
  gap: 2px;
`;

const Card = styled.div`
  height: ${(p) => p.$height}px;
  flex: none;
  padding: 0 9px;
  background: #fff;
  border-bottom: 2px solid #cdcdcd;
  overflow: hidden;
`;

const CardHead = styled.div`
  height: 38px;
  margin: 0 -4px 0 -3px;
  display: flex;
  justify-content: space-between;
  align-items: flex-start;
`;

const CardTitle = styled.div`
  font-size: 22px;
  line-height: 34px;
  color: #0b6f93;
`;

const ChevronSlot = styled.div`
  margin-top: 8px;
  line-height: 0;
`;

const Row = styled.div`
  height: 32px;
  display: flex;
  align-items: center;
  justify-content: space-between;
`;

const RowWithGap = styled(Row)`
  margin-top: 2px;
`;

const CheckRow = styled(RowWithGap)`
  height: 28px;
  justify-content: flex-start;
  gap: 4px;
`;

const RowText = styled.span`
  font-size: 18px;
  line-height: 26px;
  white-space: nowrap;
`;

const Label = styled.div`
  display: flex;
  align-items: center;
  gap: 4px;
`;

const ActiveLabel = styled(Label)`
  width: 311px;
  height: 32px;
  background: #ffdf75;
`;

const RowTools = styled.div`
  display: flex;
  align-items: center;
  gap: 2px;
`;

const SmallTool = styled.div`
  width: 24px;
  height: 24px;
  display: flex;
  align-items: center;
  justify-content: center;
  border: 1px solid #a8a8a8;
`;

const BigTool = styled.div`
  width: 32px;
  height: 32px;
  display: flex;
  align-items: center;
  justify-content: center;
  border: 1px solid ${(p) => (p.$active ? "#ffdf75" : "#a8a8a8")};
  background: ${(p) => (p.$active ? "#ffdf75" : "#fff")};
`;

const SplitTool = styled.div`
  width: 58px;
  height: 32px;
  display: flex;
  border: 1px solid #a8a8a8;
`;

const SplitMain = styled.div`
  width: 31px;
  display: flex;
  align-items: center;
  justify-content: center;
  border-right: 1px solid #a8a8a8;
`;

const SplitDrop = styled.div`
  flex: 1;
  display: flex;
  align-items: center;
  justify-content: center;
`;

const SelectBox = styled.div`
  width: 152px;
  height: 32px;
  flex: none;
  padding: 0 7px 0 4px;
  display: flex;
  align-items: center;
  border: 1px solid #a8a8a8;
  background: #fff;
`;

const SelectIcon = styled.span`
  display: flex;
  margin-right: 4px;
`;

const SelectText = styled.span`
  flex: 1;
  font-size: 18px;
  line-height: 26px;
`;

const UnitText = styled.span`
  margin-right: 10px;
  font-size: 17px;
  line-height: 26px;
`;

const Caret = styled.span`
  display: block;
  flex: none;
  width: 0;
  height: 0;
  border-left: ${(p) => (p.$small ? 4 : 5.5)}px solid transparent;
  border-right: ${(p) => (p.$small ? 4 : 5.5)}px solid transparent;
  border-top: ${(p) => (p.$small ? 4 : 6)}px solid #222;
`;

const CheckBox = styled.span`
  width: 22px;
  height: 22px;
  flex: none;
  display: flex;
  align-items: center;
  justify-content: center;
  border: 1px solid #333;
  background: #fff;
`;

const PreviewRow = styled.div`
  height: 30px;
  margin-top: 1px;
  padding: 0 4px;
  display: flex;
  align-items: center;
  justify-content: space-between;
`;

const PreviewLeft = styled.div`
  display: flex;
  align-items: center;
  gap: 4px;
`;

const PreviewRight = styled.div`
  display: flex;
  align-items: center;
  gap: 3px;
`;

const ResultButton = styled.div`
  width: 23px;
  height: 28px;
  display: flex;
  align-items: center;
  justify-content: center;
  border: 1px solid #a8a8a8;
`;

const CollapseRow = styled.div`
  height: 15px;
  padding-right: 3px;
  display: flex;
  align-items: center;
  justify-content: center;
  border-bottom: 1px solid #cfcfcf;
  span {
    border-left-width: 5.5px;
    border-right-width: 5.5px;
  }
`;

const ButtonRow = styled.div`
  margin-top: 6px;
  padding-right: 9px;
  display: flex;
  justify-content: flex-end;
  gap: 5px;
`;

const OkButton = styled.div`
  width: 66px;
  height: 32px;
  background: #72b1c8;
  color: #fff;
  font-size: 18px;
  line-height: 31px;
  text-align: center;
  white-space: nowrap;
`;

const CancelButton = styled.div`
  width: 66px;
  height: 32px;
  border: 1px solid #a8a8a8;
  background: #dcdcdc;
  font-size: 18px;
  line-height: 30px;
  text-align: center;
`;

const FloatingInput = styled.div`
  position: absolute;
  left: 887px;
  top: 607px;
  width: 210px;
  height: 40px;
  padding: 0 7px 0 4px;
  display: flex;
  align-items: center;
  gap: 3px;
  background: #f0f0f0;
  border: 1px solid #a8a8a8;
`;

const Grip = styled.span`
  width: 6px;
  height: 34px;
  margin-right: 4px;
  background-image: radial-gradient(#b5b5b5 1px, transparent 1.2px);
  background-size: 3px 3px;
`;

const FloatSelect = styled.div`
  width: 54px;
  height: 31px;
  padding: 0 7px 0 5px;
  display: flex;
  align-items: center;
  justify-content: space-between;
  background: #fff;
  border: 1px solid #a8a8a8;
`;

const FloatField = styled.div`
  width: 88px;
  height: 30px;
  padding: 0 7px 0 4px;
  display: flex;
  align-items: center;
  justify-content: space-between;
  background: #fff;
  border: 1px solid #a8a8a8;
`;

const Selected = styled.span`
  width: 11px;
  background: #0078d7;
  color: #fff;
  font-size: 18px;
  line-height: 24px;
`;

const Watermark = styled.svg`
  position: absolute;
  left: 1242px;
  top: 811px;
  width: 72px;
  height: 82px;
  pointer-events: none;
  mix-blend-mode: multiply;
`;
